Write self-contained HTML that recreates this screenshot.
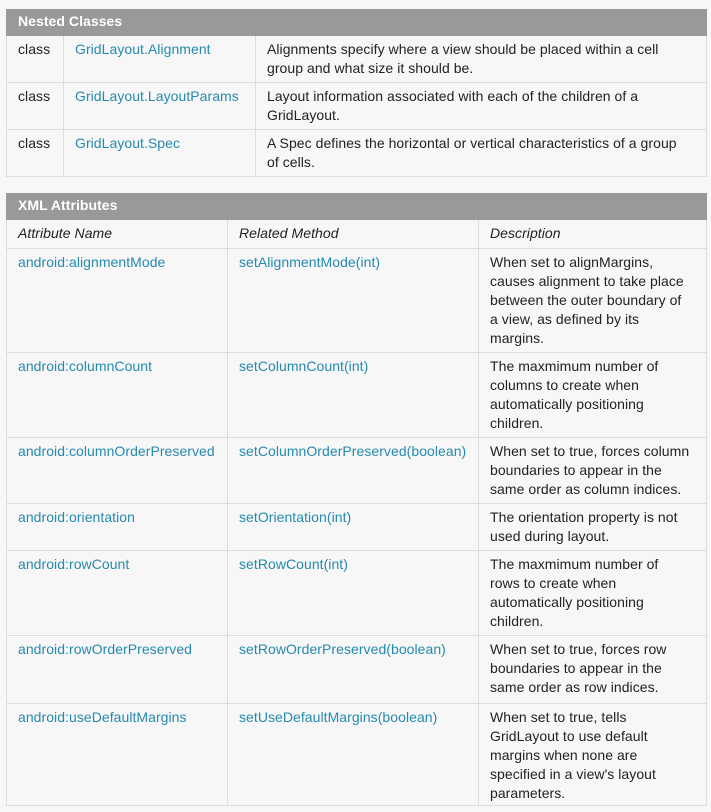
<!DOCTYPE html>
<html><head><meta charset="utf-8"><style>
body{margin:0;background:#f7f7f7;width:711px;height:812px;overflow:hidden;font-family:"Liberation Sans",sans-serif;font-size:14px;color:#222;letter-spacing:0.05px}
table{position:absolute;left:6px;width:700px;border-collapse:collapse;table-layout:fixed;background:#f7f7f7}
td,th{border:1px solid #ddd;vertical-align:top;padding:4px 11px 0 11px;line-height:19px;white-space:nowrap;text-align:left;box-sizing:border-box}
th{background:#999;color:#fff;font-weight:bold;border-color:#999;padding:2px 11px 0 11px;height:26px}
a{color:#258aaf;text-decoration:none}
.h td{font-style:italic;padding-top:4px}
</style></head><body>
<table style="top:9px">
<colgroup><col style="width:57px"><col style="width:192px"><col style="width:451px"></colgroup>
<tr><th colspan="3">Nested Classes</th></tr>
<tr style="height:47px"><td>class</td><td><a>GridLayout.Alignment</a></td><td>Alignments specify where a view should be placed within a cell<br>group and what size it should be.</td></tr>
<tr style="height:47px"><td>class</td><td><a>GridLayout.LayoutParams</a></td><td>Layout information associated with each of the children of a<br>GridLayout.</td></tr>
<tr style="height:47px"><td>class</td><td><a>GridLayout.Spec</a></td><td>A Spec defines the horizontal or vertical characteristics of a group<br>of cells.</td></tr>
</table>
<table style="top:193px">
<colgroup><col style="width:221px"><col style="width:251px"><col style="width:228px"></colgroup>
<tr><th colspan="3">XML Attributes</th></tr>
<tr class="h" style="height:29px"><td>Attribute Name</td><td>Related Method</td><td>Description</td></tr>
<tr style="height:104px"><td><a>android:alignmentMode</a></td><td><a>setAlignmentMode(int)</a></td><td>When set to alignMargins,<br>causes alignment to take place<br>between the outer boundary of<br>a view, as defined by its<br>margins.</td></tr>
<tr style="height:85px"><td><a>android:columnCount</a></td><td><a>setColumnCount(int)</a></td><td>The maxmimum number of<br>columns to create when<br>automatically positioning<br>children.</td></tr>
<tr style="height:66px"><td><a>android:columnOrderPreserved</a></td><td><a>setColumnOrderPreserved(boolean)</a></td><td>When set to true, forces column<br>boundaries to appear in the<br>same order as column indices.</td></tr>
<tr style="height:47px"><td><a>android:orientation</a></td><td><a>setOrientation(int)</a></td><td>The orientation property is not<br>used during layout.</td></tr>
<tr style="height:85px"><td><a>android:rowCount</a></td><td><a>setRowCount(int)</a></td><td>The maxmimum number of<br>rows to create when<br>automatically positioning<br>children.</td></tr>
<tr style="height:68px"><td><a>android:rowOrderPreserved</a></td><td><a>setRowOrderPreserved(boolean)</a></td><td>When set to true, forces row<br>boundaries to appear in the<br>same order as row indices.</td></tr>
<tr style="height:102px"><td><a>android:useDefaultMargins</a></td><td><a>setUseDefaultMargins(boolean)</a></td><td>When set to true, tells<br>GridLayout to use default<br>margins when none are<br>specified in a view's layout<br>parameters.</td></tr>
</table>
</body></html>
